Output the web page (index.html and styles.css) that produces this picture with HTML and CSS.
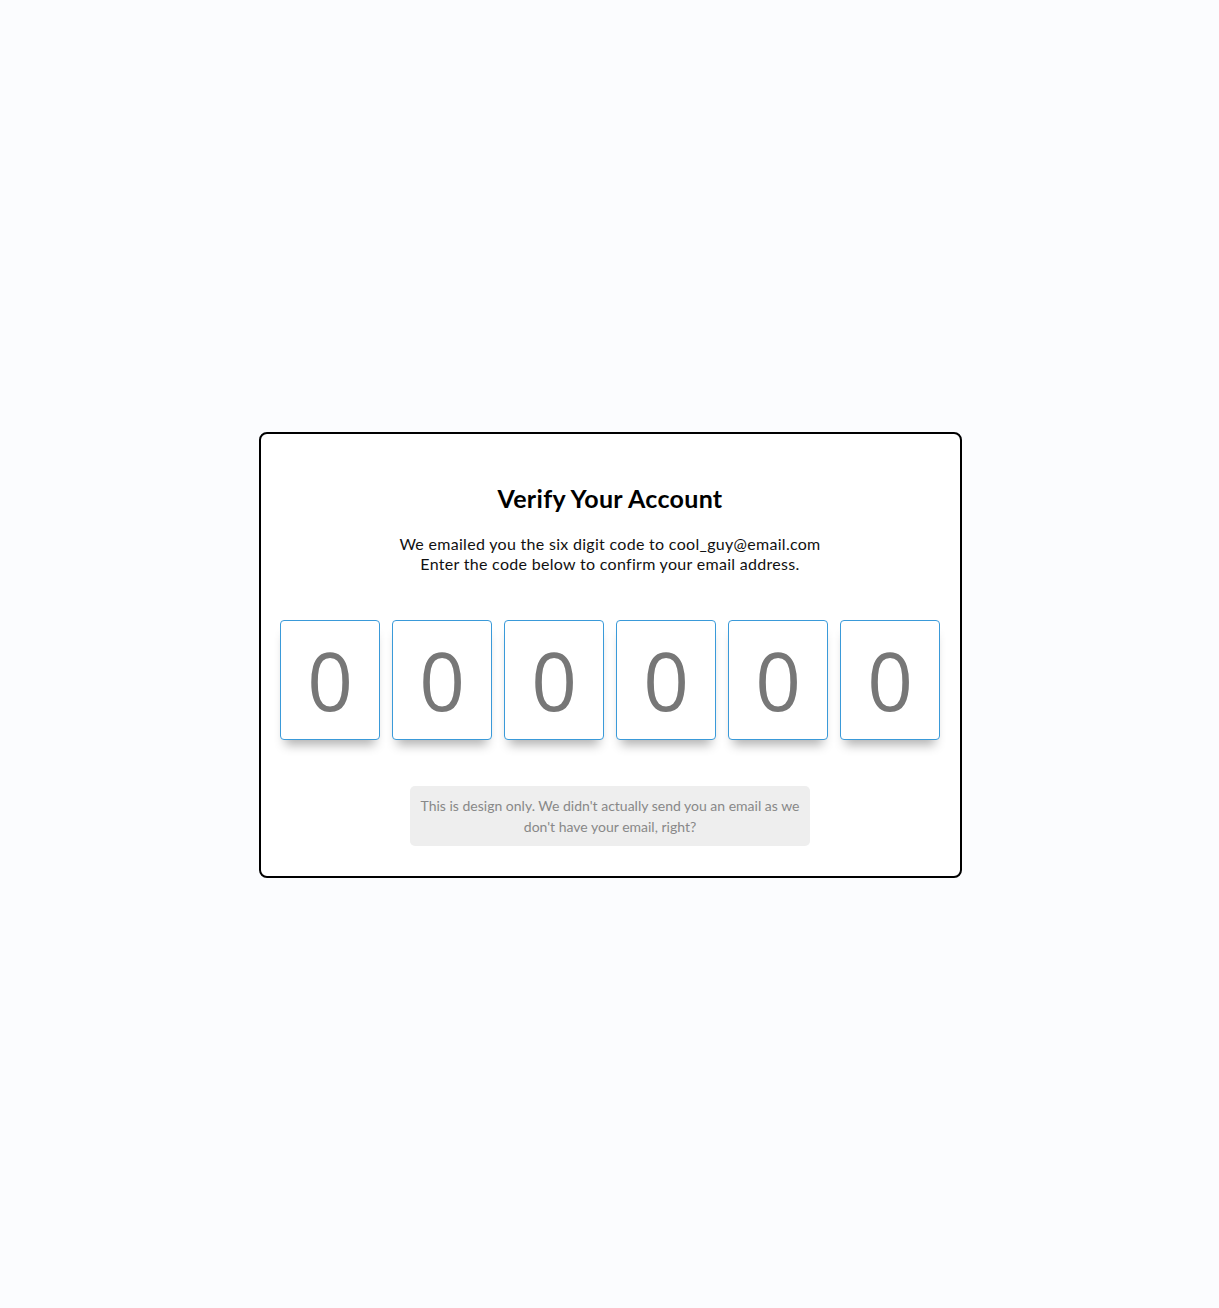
FILE: index.html
```html
<!DOCTYPE html>
<html lang="en">
<head>
<meta charset="utf-8">
<title>Verify Your Account</title>
<link rel="stylesheet" href="styles.css">
</head>
<body>
<main class="page">
  <section class="card">
    <h2 class="title">Verify Your Account</h2>
    <p class="lead">We emailed you the six digit code to cool_guy@email.com<br>Enter the code below to confirm your email address.</p>
    <div class="code">
      <input class="digit" type="text" maxlength="1" placeholder="0">
      <input class="digit" type="text" maxlength="1" placeholder="0">
      <input class="digit" type="text" maxlength="1" placeholder="0">
      <input class="digit" type="text" maxlength="1" placeholder="0">
      <input class="digit" type="text" maxlength="1" placeholder="0">
      <input class="digit" type="text" maxlength="1" placeholder="0">
    </div>
    <small class="note">This is design only. We didn't actually send you an email as we don't have your email, right?</small>
  </section>
</main>
</body>
</html>
```

FILE: styles.css
```css
* { box-sizing: border-box; }
html, body { margin: 0; padding: 0; }
body {
  background: #fbfcfe;
  font-family: "Lato", "Nunito", "Noto Sans", sans-serif;
  color: #000;
}
.page {
  min-height: 100vh;
  display: flex;
  align-items: center;
  justify-content: center;
  padding-left: 2px;
  padding-top: 1px;
}
.card {
  width: 703px;
  background: #fff;
  border: 2px solid #000;
  border-radius: 8px;
  padding: 40px 20px 30px 19px;
  display: flex;
  flex-direction: column;
  align-items: center;
  text-align: center;
}
.title {
  margin: 8px 0 0;
  font-size: 25px;
  font-weight: 700;
  line-height: 32px;
  letter-spacing: 0.3px;
}
.lead {
  margin: 20px 0 0;
  font-size: 16px;
  line-height: 20px;
  letter-spacing: 0.3px;
  color: #111;
}
.code {
  margin-top: 46px;
  display: flex;
  gap: 12px;
}
.digit {
  width: 100px;
  height: 120px;
  border: 1px solid #3a9ad9;
  border-radius: 4px;
  background: #fff;
  box-shadow: 0 10px 10px -5px rgba(0, 0, 0, 0.3);
  font-family: "Open Sans", sans-serif;
  font-size: 80px;
  text-align: center;
  color: #777;
  padding: 0;
  outline: none;
}
.digit::placeholder { color: #777; opacity: 1; }
.note {
  margin-top: 46px;
  width: 400px;
  background: #eee;
  border-radius: 5px;
  padding: 9px 10px;
  font-size: 14px;
  line-height: 21px;
  color: #888;
}
```
